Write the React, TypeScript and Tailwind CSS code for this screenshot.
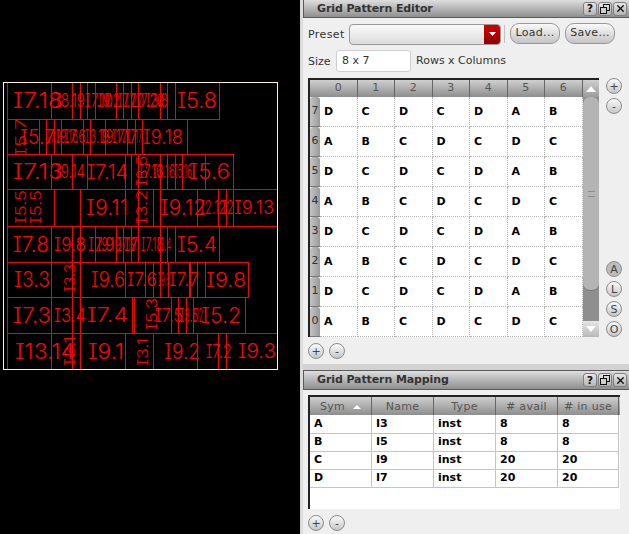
import { X } from 'lucide-react';

type Box = [number, number, string?, number?, number?, number?];

interface DesignRow {
  top: number;
  bottom: number;
  boxes: Box[]; // x0, x1, label, label x, label width, label size
}

const designRows: DesignRow[] = [
  { top: 82, bottom: 119, boxes: [
    [7, 72, 'I7.18', 13, 50, 21], [51, 95, 'I8.19', 55, 30, 19], [80, 116, 'I7.10', 85, 28, 19],
    [87, 123, 'I9.2', 98, 22, 19], [116, 131, 'I7.20', 118, 26, 19], [123, 138, 'I7', 124, 12, 19],
    [131, 160, 'I7.20', 136, 28, 19], [138, 167, 'I3.8', 146, 22, 19], [160, 175], [175, 219, 'I5.8', 177, 40, 21],
  ] },
  { top: 119, bottom: 154, boxes: [
    [7, 39, 'I5.7', 20, 35, 20], [39, 61, 'I7.9', 47, 14, 19], [46, 83, 'I9.16', 56, 22, 19],
    [54, 90, 'I7.6', 64, 22, 19], [83, 105, 'I3.19', 85, 24, 19], [90, 127, 'I9.17', 100, 28, 19],
    [105, 135, 'I7.17', 112, 25, 19], [127, 142, 'I7.17', 128, 14, 19], [142, 187, 'I9.18', 143, 40, 20],
  ] },
  { top: 154, bottom: 189, boxes: [
    [7, 72, 'I7.13', 13, 50, 21], [51, 87, 'I9.14', 55, 30, 19], [72, 131, 'I7.14', 87, 41, 20],
    [125, 138], [131, 160, 'I7.16', 139, 24, 19], [138, 167, 'I3.16', 153, 22, 19],
    [160, 182, 'I5.16', 174, 18, 19], [175, 205], [182, 233, 'I5.6', 189, 41, 21],
  ] },
  { top: 189, bottom: 226, boxes: [
    [7, 54], [80, 125, 'I9.11', 86, 42, 21], [125, 160], [138, 197, 'I9.12', 160, 46, 21],
    [153, 218], [197, 226, 'I2.12', 200, 26, 19], [218, 233, 'I2', 222, 12, 19], [233, 277, 'I9.13', 234, 40, 18],
  ] },
  { top: 226, bottom: 262, boxes: [
    [7, 72, 'I7.8', 13, 36, 21], [51, 95, 'I9.8', 54, 32, 19], [80, 116, 'I7.9', 88, 26, 19],
    [95, 123, 'I9.19', 97, 24, 19], [116, 131, 'I7.19', 118, 18, 19], [123, 138, 'I7', 124, 14, 19],
    [131, 160, 'I7.18', 141, 22, 19], [138, 167, 'I3.4', 157, 14, 19], [160, 175], [175, 219, 'I5.4', 177, 40, 21],
  ] },
  { top: 262, bottom: 297, boxes: [
    [7, 72, 'I3.3', 14, 36, 21], [51, 125, 'I9.6', 91, 34, 21], [80, 145, 'I7.6', 127, 30, 19],
    [145, 160, 'I9.9', 158, 12, 19], [153, 189, 'I7.7', 169, 30, 19], [168, 205], [190, 197],
    [205, 248, 'I9.8', 206, 40, 20],
  ] },
  { top: 297, bottom: 333, boxes: [
    [7, 72, 'I7.3', 13, 38, 21], [51, 132, 'I3.4', 54, 32, 19], [80, 132, 'I7.4', 87, 41, 20],
    [134, 171, 'I7.5', 155, 28, 19], [171, 186, 'I3.5', 180, 18, 19], [178, 193, 'I12', 193, 10, 19],
    [193, 245, 'I5.2', 201, 40, 21],
  ] },
  { top: 333, bottom: 369, boxes: [
    [7, 72, 'I13.14', 15, 60, 21], [51, 125, 'I9.1', 88, 36, 21], [80, 153], [125, 197, 'I9.2', 164, 36, 21],
    [153, 218, 'I7.2', 206, 26, 19], [197, 226], [226, 277, 'I9.3', 238, 38, 20],
  ] },
];

// rotated labels: x, y (baseline origin), text
const sideways: [number, number, string, number][] = [
  [26, 156, 'I5.7', 38], [26, 224, 'I5.5', 34], [41, 224, 'I5.5', 34], [147, 186, 'I3.5', 30],
  [147, 224, 'I3.2', 34], [75, 292, 'I3.3', 28], [75, 366, 'I3.1', 30], [157, 330, 'I5.3', 32],
  [148, 366, 'I3.1', 28],
];

const labelFont = "font-['Inter',sans-serif] font-light [font-feature-settings:'cv08','ss02']";

const Design = () => (
  <svg width="300" height="534" className="block shrink-0" fill="none">
    {designRows.map((row) =>
      row.boxes.map(([x0, x1, label, lx, lw, size]) => (
        <g key={`${row.top}-${x0}-${x1}`}>
          <rect x={x0 + 0.5} y={row.top + 0.5} width={x1 - x0} height={row.bottom - row.top} stroke="#ff0000" />
          {label && (
            <text
              x={lx}
              y={(row.top + row.bottom) / 2 + (size ?? 19) * 0.36}
              fill="#ff0000"
              fontSize={size}
              textLength={lw}
              lengthAdjust="spacingAndGlyphs"
              className={labelFont}
            >
              {label}
            </text>
          )}
        </g>
      ))
    )}
    {sideways.map(([x, y, label, len]) => (
      <text
        key={`${x}-${y}`}
        transform={`translate(${x} ${y}) rotate(-90)`}
        fill="#ff0000"
        fontSize="14"
        textLength={len}
        lengthAdjust="spacingAndGlyphs"
        className={labelFont}
      >
        {label}
      </text>
    ))}
    <rect x="3.5" y="82.5" width="274" height="287" stroke="#fff4d0" />
  </svg>
);

const TitleBar = ({ title, first }: { title: string; first?: boolean }) => (
  <div
    className={`flex items-center bg-linear-to-b from-[#dedede] to-[#8f8f8f] border-b border-l border-[#5a5a5a] pl-[13px] pr-[2px] shrink-0 ${
      first ? 'h-[18px]' : 'h-[20px] border-t'
    }`}
  >
    <span className="pt-[1px] text-[11px] font-bold tracking-[-0.1px] text-[#333] flex-1">{title}</span>
    {['help', 'float', 'close'].map((kind) => (
      <span
        key={kind}
        className="w-[14px] h-[14px] ml-[1px] flex items-center justify-center rounded-[3px] border border-[#808080] bg-linear-to-b from-[#e6e6e6] to-[#b4b4b4] text-[11px] font-bold leading-none text-[#111]"
      >
        {kind === 'help' && '?'}
        {kind === 'float' && (
          <svg width="10" height="10" viewBox="0 0 10 10" fill="none" stroke="#111">
            <rect x="3.5" y="0.5" width="6" height="6" />
            <rect x="0.5" y="3.5" width="6" height="6" fill="#d0d0d0" />
          </svg>
        )}
        {kind === 'close' && <X size={11} strokeWidth={3} />}
      </span>
    ))}
  </div>
);

const RoundButton = ({ label, pressed }: { label: string; pressed?: boolean }) => (
  <span
    className={`w-[16px] h-[16px] rounded-full border border-[#8c8c8c] flex items-center justify-center text-[11px] leading-none text-[#444] ${
      pressed ? 'bg-[#bdbdbd]' : 'bg-linear-to-b from-[#fbfbfb] to-[#c6c6c6]'
    }`}
  >
    {label}
  </span>
);

const PushButton = ({ label }: { label: string }) => (
  <span className="w-[50px] h-[21px] mb-[2px] rounded-[9px] border border-[#9a9a9a] bg-linear-to-b from-[#fafafa] to-[#c4c4c4] flex items-center justify-center text-[11px] tracking-[0.3px] text-[#333]">
    {label}
  </span>
);

const patternRows: [number, string[]][] = [7, 6, 5, 4, 3, 2, 1, 0].map((row) => [
  row,
  row % 2 === 1 ? ['D', 'C', 'D', 'C', 'D', 'A', 'B'] : ['A', 'B', 'C', 'D', 'C', 'D', 'C'],
]);

const ScrollArrow = ({ up }: { up?: boolean }) => (
  <svg width="10" height="6" viewBox="0 0 10 6" fill="#ffffff">
    <path d={up ? 'M5 0 L10 6 L0 6 Z' : 'M0 0 L10 0 L5 6 Z'} />
  </svg>
);

const PatternGrid = () => (
  <div className="w-[291px] h-[259px] border-t-2 border-l-2 border-[#222] bg-white flex shrink-0 overflow-hidden">
    <div className="w-[273px] flex flex-col">
      <div className="h-[17px] flex bg-linear-to-b from-[#d0d0d0] to-[#8e8e8e] pl-[10px] shrink-0">
        {[0, 1, 2, 3, 4, 5, 6].map((col) => (
          <span key={col} className="w-[37.5px] flex items-center justify-center text-[11px] text-[#555] border-r border-[#666]">
            {col}
          </span>
        ))}
      </div>
      {patternRows.map(([row, cells]) => (
        <div key={row} className="h-[30px] flex shrink-0">
          <span className="w-[10px] rounded-t-[3px] border-b border-[#777] bg-linear-to-r from-[#c4c4c4] to-[#9a9a9a] flex items-center justify-center text-[11px] text-[#333] shrink-0">
            {row}
          </span>
          {cells.map((cell, i) => (
            <span
              key={i}
              className="w-[37.5px] pl-[4px] pt-[1px] flex items-center text-[11px] font-bold text-black border-r border-b border-dotted border-[#b5b5b5]"
            >
              {cell}
            </span>
          ))}
        </div>
      ))}
    </div>
    <div className="w-[16px] flex flex-col bg-[#8f8f8f] shrink-0">
      <div className="h-[17px] flex items-center justify-center bg-linear-to-b from-[#cfcfcf] to-[#9c9c9c] shrink-0">
        <ScrollArrow up />
      </div>
      <div className="h-[194px] rounded-[7px] bg-[#b4b4b4] border-b border-[#777] flex items-center justify-center shrink-0">
        <span className="w-[7px] h-[6px] border-y border-[#8a8a8a]" />
      </div>
      <div className="flex-1" />
      <div className="h-[16px] flex items-center justify-center bg-linear-to-b from-[#e6e6e6] to-[#b8b8b8] shrink-0">
        <ScrollArrow />
      </div>
    </div>
  </div>
);

const mappingRows = [
  ['A', 'I3', 'inst', '8', '8'],
  ['B', 'I5', 'inst', '8', '8'],
  ['C', 'I9', 'inst', '20', '20'],
  ['D', 'I7', 'inst', '20', '20'],
];

const MappingTable = () => (
  <div className="w-[312px] h-[114px] border-t-2 border-l-2 border-[#222] bg-white shrink-0 overflow-hidden">
    <div className="grid grid-cols-[62px_62px_62px_62px_61px] h-[18px] bg-linear-to-b from-[#cfcfcf] to-[#8e8e8e]">
      {['Sym', 'Name', 'Type', '# avail', '# in use'].map((head) => (
        <span key={head} className="pt-[2px] flex items-center justify-center gap-[8px] text-[11px] tracking-[0.3px] text-[#555] border-r border-[#666]">
          {head}
          {head === 'Sym' && (
            <svg width="8" height="4" viewBox="0 0 8 4" fill="#ffffff">
              <path d="M4 0 L8 4 L0 4 Z" />
            </svg>
          )}
        </span>
      ))}
    </div>
    {mappingRows.map((row) => (
      <div key={row[0]} className="grid grid-cols-[62px_62px_62px_62px_61px] h-[18px]">
        {row.map((cell, i) => (
          <span
            key={i}
            className="pl-[4px] pt-[1px] flex items-center text-[11px] font-bold text-black border-r border-b border-[#c4c4c4]"
          >
            {cell}
          </span>
        ))}
      </div>
    ))}
  </div>
);

export default function App() {
  return (
    <div className="w-[629px] h-[534px] flex bg-black overflow-hidden font-['DejaVu_Sans',sans-serif]">
      <Design />
      <div className="w-[3px] bg-[#dcdcdc] shrink-0" />
      <div className="flex-1 flex flex-col bg-[#efefef]">
        <div className="h-[364px] flex flex-col">
          <TitleBar title="Grid Pattern Editor" first />
          <div className="pl-[5px] pt-[4px] flex flex-col">
            <div className="h-[24px] flex items-center text-[11px] text-[#333]">
              <span className="w-[41px] pt-[2px] tracking-[0.4px]">Preset</span>
              <div className="w-[152px] h-[21px] flex rounded-[4px] border border-[#999] bg-linear-to-b from-[#fafafa] to-[#dcdcdc] justify-end overflow-hidden">
                <span className="w-[16px] bg-linear-to-b from-[#d40000] to-[#8e0000] flex items-center justify-center">
                  <svg width="7" height="4" viewBox="0 0 7 4" fill="#ffffff">
                    <path d="M0 0 L7 0 L3.5 4 Z" />
                  </svg>
                </span>
              </div>
              <span className="w-[1px] h-[18px] bg-[#c0c0c0] ml-[3px] mr-[5px]" />
              <PushButton label="Load..." />
              <span className="w-[5px]" />
              <PushButton label="Save..." />
            </div>
            <div className="h-[22px] mt-[4px] flex items-center text-[11px] text-[#333]">
              <span className="w-[28px] pt-[2px]">Size</span>
              <span className="w-[75px] h-[22px] bg-white border border-[#cfcfcf] rounded-[3px] pl-[5px] flex items-center">8 x 7</span>
              <span className="ml-[5px] pt-[1px]">Rows x Columns</span>
            </div>
            <div className="mt-[6px] flex">
              <PatternGrid />
              <div className="w-[16px] ml-[7px] flex flex-col gap-[4px]">
                <RoundButton label="+" />
                <RoundButton label="-" />
                <div className="h-[139px]" />
                <RoundButton label="A" pressed />
                <RoundButton label="L" />
                <RoundButton label="S" />
                <RoundButton label="O" />
              </div>
            </div>
            <div className="mt-[6px] flex gap-[5px]">
              <RoundButton label="+" />
              <RoundButton label="-" />
            </div>
          </div>
        </div>
        <div className="h-[6px] bg-[#d2d2d2] shrink-0" />
        <TitleBar title="Grid Pattern Mapping" />
        <div className="pl-[5px] pt-[5px] flex flex-col">
          <MappingTable />
          <div className="mt-[6px] flex gap-[5px]">
            <RoundButton label="+" />
            <RoundButton label="-" />
          </div>
        </div>
      </div>
    </div>
  );
}
